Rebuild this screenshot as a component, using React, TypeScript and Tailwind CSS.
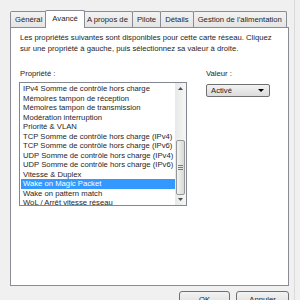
import React from "react";

const tabs = ["Général", "Avancé", "A propos de", "Pilote", "Détails", "Gestion de l’alimentation"];

const items = [
  "IPv4 Somme de contrôle hors charge",
  "Mémoires tampon de réception",
  "Mémoires tampon de transmission",
  "Modération interruption",
  "Priorité & VLAN",
  "TCP Somme de contrôle hors charge (IPv4)",
  "TCP Somme de contrôle hors charge (IPv6)",
  "UDP Somme de contrôle hors charge (IPv4)",
  "UDP Somme de contrôle hors charge (IPv6)",
  "Vitesse & Duplex",
  "Wake on Magic Packet",
  "Wake on pattern match",
  "WoL / Arrêt vitesse réseau",
];

export default function App() {
  return (
    <div
      className="w-[300px] h-[300px] overflow-hidden bg-[#f0f0f0] text-[#1e1e1e] text-[7.7px] leading-[10px]"
      style={{ fontFamily: '"Liberation Sans", Arial, sans-serif' }}
    >
      <div className="flex h-full">
        <div className="w-[295px] border-r border-[#dadada] pl-[10px] pt-[10px]">
          {/* tab strip */}
          <div className="relative z-10 flex items-end h-[18px] -mb-px">
            {tabs.map((t) =>
              t === "Avancé" ? (
                <div
                  key={t}
                  className="h-[18px] -mx-[2px] px-[6px] pt-[3px] bg-white border border-b-0 border-[#898c95] rounded-t-[2px] relative z-10"
                >
                  {t}
                </div>
              ) : (
                <div
                  key={t}
                  className="h-[16px] mb-px -ml-px first:ml-0 px-[4px] pt-[2.5px] border border-b-0 border-[#898c95] rounded-t-[2px] bg-gradient-to-b from-[#f3f3f3] to-[#e4e4e4]"
                >
                  {t}
                </div>
              )
            )}
          </div>

          {/* tab page */}
          <div className="w-[279px] h-[259px] border border-[#898c95] bg-white pl-[8px] pt-[5px]">
            <p className="pl-[1px] leading-[10.5px]">
              Les propriétés suivantes sont disponibles pour cette carte réseau. Cliquez
              <br />
              sur une propriété à gauche, puis sélectionnez sa valeur à droite.
            </p>

            <div className="flex mt-[15px]">
              <div className="w-[168px]">
                <div className="pl-[1px]">Propriété :</div>
                <div className="mt-[3px] h-[124px] flex border border-[#828790] bg-white">
                  <div className="flex-1 pt-[1px] pl-[1px]">
                    {items.map((it) => (
                      <div
                        key={it}
                        className={
                          "h-[9.5px] leading-[9.5px] pl-[2px] whitespace-nowrap " +
                          (it === "Wake on Magic Packet" ? "bg-[#3399ff] text-white" : "")
                        }
                      >
                        {it}
                      </div>
                    ))}
                  </div>
                  {/* scrollbar */}
                  <div className="w-[11px] flex flex-col bg-gradient-to-r from-[#e8e8e8] to-[#f6f6f6]">
                    <div className="h-[11px] flex items-center justify-center">
                      <svg width="5" height="3" viewBox="0 0 5 3">
                        <path d="M2.5 0 L5 3 L0 3 Z" fill="#4d4d4d" />
                      </svg>
                    </div>
                    <div className="flex-1 flex flex-col">
                      <div className="h-[46px]" />
                      <div className="h-[55px] mx-[1px] rounded-[2px] border border-[#979797] bg-gradient-to-r from-[#f4f4f4] to-[#d9d9d9] flex flex-col items-center justify-center gap-[1px]">
                        <div className="w-[5px] h-px bg-[#7a7a7a]" />
                        <div className="w-[5px] h-px bg-[#7a7a7a]" />
                        <div className="w-[5px] h-px bg-[#7a7a7a]" />
                      </div>
                    </div>
                    <div className="h-[11px] flex items-center justify-center">
                      <svg width="5" height="3" viewBox="0 0 5 3">
                        <path d="M0 0 L5 0 L2.5 3 Z" fill="#4d4d4d" />
                      </svg>
                    </div>
                  </div>
                </div>
              </div>

              <div className="ml-[19px]">
                <div>Valeur :</div>
                <div className="mt-[5px] w-[64px] h-[13px] border border-[#707070] rounded-[2px] bg-gradient-to-b from-[#f2f2f2] to-[#dcdcdc] flex items-center justify-between pl-[4px] pr-[5px]">
                  <span>Activé</span>
                  <svg width="6" height="3" viewBox="0 0 6 3">
                    <path d="M0 0 L6 0 L3 3 Z" fill="#000" />
                  </svg>
                </div>
              </div>
            </div>
          </div>

          {/* buttons */}
          <div className="flex justify-end gap-[6px] w-[279px] mt-[5px]">
            <div className="w-[51px] h-[17px] border border-[#707070] rounded-[3px] bg-gradient-to-b from-[#f2f2f2] to-[#dcdcdc] flex items-start justify-center pt-[3px]">
              OK
            </div>
            <div className="w-[53px] h-[17px] border border-[#707070] rounded-[3px] bg-gradient-to-b from-[#f2f2f2] to-[#dcdcdc] flex items-start justify-center pt-[3px]">
              Annuler
            </div>
          </div>
        </div>
      </div>
    </div>
  );
}
